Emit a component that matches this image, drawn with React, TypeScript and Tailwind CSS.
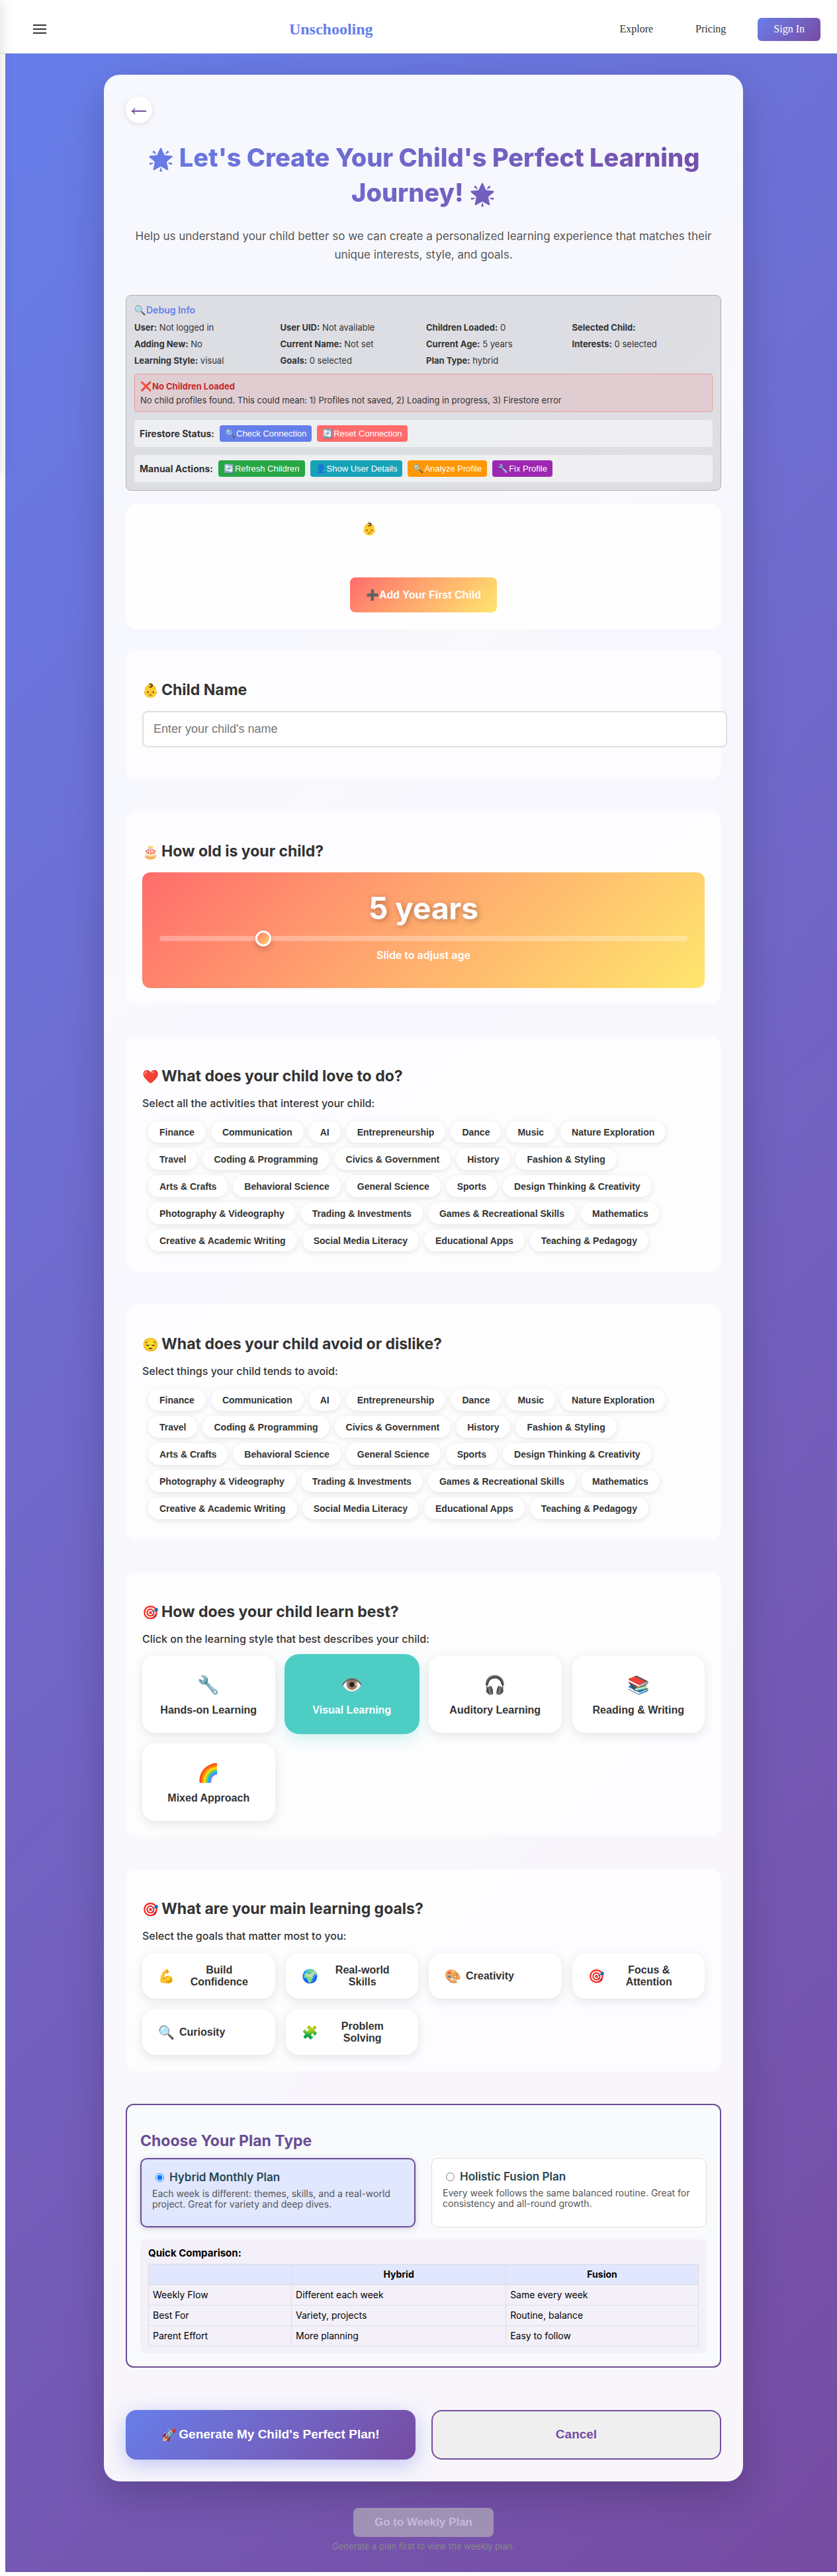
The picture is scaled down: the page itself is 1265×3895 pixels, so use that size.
import { useState } from "react";
import type { ReactNode } from "react";

const TOPICS = [
  "Finance", "Communication", "AI", "Entrepreneurship", "Dance", "Music", "Nature Exploration",
  "Travel", "Coding & Programming", "Civics & Government", "History", "Fashion & Styling",
  "Arts & Crafts", "Behavioral Science", "General Science", "Sports", "Design Thinking & Creativity",
  "Photography & Videography", "Trading & Investments", "Games & Recreational Skills", "Mathematics",
  "Creative & Academic Writing", "Social Media Literacy", "Educational Apps", "Teaching & Pedagogy",
];

const DEBUG_ROWS = [
  ["User:", "Not logged in"],
  ["User UID:", "Not available"],
  ["Children Loaded:", "0"],
  ["Selected Child:", ""],
  ["Adding New:", "No"],
  ["Current Name:", "Not set"],
  ["Current Age:", "5 years"],
  ["Interests:", "0 selected"],
  ["Learning Style:", "visual"],
  ["Goals:", "0 selected"],
  ["Plan Type:", "hybrid"],
];

const STYLES = [
  ["🔧", "Hands-on Learning"],
  ["👁️", "Visual Learning"],
  ["🎧", "Auditory Learning"],
  ["📚", "Reading & Writing"],
  ["🌈", "Mixed Approach"],
];

const GOALS = [
  ["💪", "Build Confidence"],
  ["🌍", "Real-world Skills"],
  ["🎨", "Creativity"],
  ["🎯", "Focus & Attention"],
  ["🔍", "Curiosity"],
  ["🧩", "Problem Solving"],
];

const COMPARISON = [
  ["Weekly Flow", "Different each week", "Same every week"],
  ["Best For", "Variety, projects", "Routine, balance"],
  ["Parent Effort", "More planning", "Easy to follow"],
];

function Section({ icon, title, children, className = "pb-6" }: { icon: string; title: string; children: ReactNode; className?: string }) {
  return (
    <section className={`mb-[49px] rounded-2xl bg-white/70 px-[25px] pt-[46px] ${className}`}>
      <h2 className="mb-[17px] flex h-[29px] items-center text-[23px] leading-[29px] font-bold">
        <span className="flex w-[29px] shrink-0 text-xl">{icon}</span>
        {title}
      </h2>
      {children}
    </section>
  );
}

function TopicPicker({ label }: { label: string }) {
  const [picked, setPicked] = useState<string[]>([]);
  return (
    <div>
      <p className="text-base leading-[19px] font-medium">{label}</p>
      <div className="mt-2 flex flex-wrap gap-2 rounded-xl bg-white/30 px-[9px] pt-[9px] pb-[7px]">
        {TOPICS.map((topic) => (
          <button
            key={topic}
            type="button"
            aria-pressed={picked.includes(topic)}
            onClick={() => setPicked(picked.includes(topic) ? picked.filter((t) => t !== topic) : [...picked, topic])}
            className={`h-[33px] rounded-[20px] px-[17px] font-['Liberation_Sans',Arial,sans-serif] text-sm font-bold shadow-[0_2px_8px_rgba(0,0,0,0.1)] ${picked.includes(topic) ? "bg-[#4ecdc4] text-white" : "bg-white"}`}
          >
            {topic}
          </button>
        ))}
      </div>
    </div>
  );
}

function DebugButton({ icon, color, children }: { icon: string; color: string; children: ReactNode }) {
  return (
    <button type="button" className={`flex h-[25px] items-center rounded px-2 font-['Liberation_Sans',Arial,sans-serif] text-[13px] text-white ${color}`}>
      <span className="flex w-[17px] text-[13px]">{icon}</span>
      {children}
    </button>
  );
}

function PlanOption({ name, text, checked, onSelect }: { name: string; text: string; checked: boolean; onSelect: () => void }) {
  return (
    <label
      className={`block h-[105px] cursor-pointer rounded-[10px] p-4 ${checked ? "border-2 border-[#6a4c93] bg-[#e0e7ff] shadow-[0_2px_8px_rgba(106,76,147,0.25)]" : "border border-[#dddddd] bg-white"}`}
    >
      <span className="flex items-center text-[17px] leading-[22px] font-semibold text-[#264653]">
        <input type="radio" name="plan" checked={checked} onChange={onSelect} className="mr-2 ml-[5px] size-[13px] shrink-0 accent-[#0075ff]" />
        {name}
      </span>
      <span className="mt-[6px] block text-sm leading-4 text-[#555555]">{text}</span>
    </label>
  );
}

export default function App() {
  const [name, setName] = useState("");
  const [age, setAge] = useState(5);
  const [style, setStyle] = useState("Visual Learning");
  const [goals, setGoals] = useState<string[]>([]);
  const [plan, setPlan] = useState("hybrid");

  return (
    <div className="relative overflow-hidden bg-white pb-2 font-['Inter',sans-serif] text-[#333333]">
      <header className="flex h-[81px] items-center justify-between border-b border-[#e0e0e0] bg-white pt-2 pr-[25px] pl-[46px] font-['Liberation_Serif',serif] text-base">
        <button type="button" aria-label="Open menu" className="-mr-[10px] p-1">
          <svg width="20" height="14" viewBox="0 0 20 14" fill="#333333" aria-hidden="true">
            <path d="M0 0h20v2H0zM0 6h20v2H0zM0 12h20v2H0z" />
          </svg>
        </button>
        <a href="#home" className="text-2xl font-bold text-[#667eea]">Unschooling</a>
        <nav className="flex items-center gap-12">
          <a href="#explore" className="mr-4">Explore</a>
          <a href="#pricing">Pricing</a>
          <button type="button" className="h-[35px] rounded-md bg-linear-135 from-[#667eea] to-[#764ba2] px-6 text-white">Sign In</button>
        </nav>
      </header>
      <div className="absolute top-0 -left-60 h-[720px] w-60 shadow-[2px_0_20px_rgba(0,0,0,0.12)]" />

      <main className="ml-2 flex flex-col items-center bg-linear-135 from-[#667eea] to-[#764ba2] pt-8 pb-[31px] pl-[7px]">
        <div className="w-full max-w-[966px] rounded-3xl border border-white/20 bg-white/95 p-8 shadow-[0_20px_60px_rgba(0,0,0,0.2)]">
          <button type="button" aria-label="Back" className="flex size-10 items-center justify-center rounded-full bg-white text-[#764ba2] shadow-[0_2px_8px_rgba(0,0,0,0.1)]">
            <svg width="24" height="12" viewBox="0 0 24 12" fill="none" stroke="currentColor" className="mt-1" aria-hidden="true">
              <path d="M23 6H2" strokeWidth="2" />
              <path d="M6 1.5C5 3.8 3.6 5 1.5 6 3.6 7 5 8.2 6 10.5" strokeWidth="1.5" />
            </svg>
          </button>

          <h1 className="mt-[26px] bg-linear-135 from-[#667eea] to-[#764ba2] bg-clip-text text-center text-[38px] leading-[53px] font-extrabold text-transparent">
            <span className="text-[32px] leading-none">🌟</span> Let's Create Your Child's Perfect Learning
            <br />
            Journey! <span className="text-[32px] leading-none">🌟</span>
          </h1>
          <p className="mt-[25px] text-center text-[17px] leading-7 text-[#555555]">
            Help us understand your child better so we can create a personalized learning experience that matches their unique interests, style, and goals.
          </p>

          <section className="mt-[47px] rounded-lg border border-[#b0b0b4] bg-black/10 p-3 text-[13px] leading-[17px]">
            <h4 className="mb-[10px] flex items-center pt-px text-sm leading-[17px] font-semibold text-[#667eea]">
              <span className="flex w-[18px] text-sm leading-[17px]">🔍</span>Debug Info
            </h4>
            <div className="grid grid-cols-4 gap-2">
              {DEBUG_ROWS.map(([label, value]) => (
                <div key={label}>
                  <strong className="font-bold">{label}</strong> {value}
                </div>
              ))}
            </div>
            <div className="mt-[11px] rounded border border-[#ee9a9a] bg-[#ff0000]/8 px-2 pt-2 pb-[7px] leading-5">
              <div className="flex items-center font-bold text-[#c62828]">
                <span className="flex w-[18px] text-sm">❌</span>No Children Loaded
              </div>
              <p className="mt-px">No child profiles found. This could mean: 1) Profiles not saved, 2) Loading in progress, 3) Firestore error</p>
            </div>
            <div className="mt-3 flex items-center gap-2 rounded bg-white/50 p-2">
              <strong className="text-sm">Firestore Status:</strong>
              <DebugButton icon="🔍" color="bg-[#667eea]">Check Connection</DebugButton>
              <DebugButton icon="🔄" color="bg-[#ff6b6b]">Reset Connection</DebugButton>
            </div>
            <div className="mt-3 flex items-center gap-2 rounded bg-white/50 p-2">
              <strong className="text-sm">Manual Actions:</strong>
              <DebugButton icon="🔄" color="bg-[#28a745]">Refresh Children</DebugButton>
              <DebugButton icon="👤" color="bg-[#17a2b8]">Show User Details</DebugButton>
              <DebugButton icon="🔍" color="bg-[#ff9800]">Analyze Profile</DebugButton>
              <DebugButton icon="🔧" color="bg-[#9c27b0]">Fix Profile</DebugButton>
            </div>
          </section>

          <section className="mt-5 mb-8 flex flex-col items-center rounded-2xl bg-white/90 px-6 pt-[26px] pb-[25px] text-white">
            <h3 className="flex h-6 items-center text-lg font-semibold">
              <span className="flex w-6 text-lg">👶</span>No Children Found
            </h3>
            <p className="mt-[21px] text-sm leading-5">You haven't added any children yet. Add your first child to get started!</p>
            <button type="button" className="mt-5 flex h-[53px] items-center rounded-lg bg-linear-135 from-[#ff6b6b] to-[#ffe66d] px-6 font-['Liberation_Sans',Arial,sans-serif] text-base font-bold">
              <span className="flex w-5 text-base">➕</span>Add Your First Child
            </button>
          </section>

          <Section icon="👶" title="Child Name" className="pb-12">
            <input
              type="text"
              aria-label="Child Name"
              placeholder="Enter your child's name"
              value={name}
              onChange={(e) => setName(e.target.value)}
              className="-mr-[34px] block h-[55px] w-[calc(100%+34px)] rounded-lg border-2 border-[#e0e0e0] bg-white px-[15px] font-['Liberation_Sans',Arial,sans-serif] text-lg placeholder:text-[#757575]"
            />
          </Section>

          <Section icon="🎂" title="How old is your child?">
            <div className="flex h-[175px] flex-col items-center rounded-xl bg-linear-135 from-[#ff6b6b] to-[#ffe66d] px-[26px] pt-[25px] text-white">
              <output className="text-[46px] leading-[58px] font-bold [text-shadow:2px_2px_8px_rgba(0,0,0,0.3)]">{age} years</output>
              <input
                type="range"
                aria-label="Age"
                min={2}
                max={18}
                value={age}
                onChange={(e) => setAge(Number(e.target.value))}
                className="mt-[13px] h-2 w-full appearance-none rounded bg-white/30 [&::-webkit-slider-thumb]:size-6 [&::-webkit-slider-thumb]:appearance-none [&::-webkit-slider-thumb]:rounded-full [&::-webkit-slider-thumb]:border-3 [&::-webkit-slider-thumb]:border-white [&::-webkit-slider-thumb]:bg-linear-135 [&::-webkit-slider-thumb]:from-[#ff7b6b] [&::-webkit-slider-thumb]:to-[#ffd06d] [&::-webkit-slider-thumb]:shadow-[0_4px_8px_rgba(0,0,0,0.2)]"
              />
              <p className="mt-3 text-base leading-[19px] font-semibold">Slide to adjust age</p>
            </div>
          </Section>

          <Section icon="❤️" title="What does your child love to do?">
            <TopicPicker label="Select all the activities that interest your child:" />
          </Section>

          <Section icon="😔" title="What does your child avoid or dislike?">
            <TopicPicker label="Select things your child tends to avoid:" />
          </Section>

          <Section icon="🎯" title="How does your child learn best?">
            <p className="text-base leading-[19px] font-medium">Click on the learning style that best describes your child:</p>
            <div className="mt-[15px] grid grid-cols-4 gap-4">
              {STYLES.map(([icon, label]) => (
                <button
                  key={label}
                  type="button"
                  aria-pressed={style === label}
                  onClick={() => setStyle(label)}
                  className={`flex h-[117px] flex-col items-center rounded-[20px] pt-6 font-['Liberation_Sans',Arial,sans-serif] text-base leading-[18px] font-bold ${style === label ? "bg-[#4ecdc4] text-white shadow-[0_0_0_2px_#4ecdc4,0_8px_25px_rgba(78,205,196,0.3)]" : "bg-white shadow-[0_4px_16px_rgba(0,0,0,0.1)]"}`}
                >
                  <span className="flex h-[42px] items-center text-[27px]">{icon}</span>
                  <span className="mt-2">{label}</span>
                </button>
              ))}
            </div>
          </Section>

          <Section icon="🎯" title="What are your main learning goals?" className="pb-[25px]">
            <p className="text-base leading-[19px] font-medium">Select the goals that matter most to you:</p>
            <div className="mt-4 grid grid-cols-4 gap-4">
              {GOALS.map(([icon, label]) => (
                <button
                  key={label}
                  type="button"
                  aria-pressed={goals.includes(label)}
                  onClick={() => setGoals(goals.includes(label) ? goals.filter((g) => g !== label) : [...goals, label])}
                  className={`flex h-[69px] items-center gap-2 rounded-[20px] px-6 font-['Liberation_Sans',Arial,sans-serif] text-base leading-[18px] font-bold shadow-[0_4px_16px_rgba(0,0,0,0.1)] ${goals.includes(label) ? "bg-[#4ecdc4] text-white" : "bg-white"}`}
                >
                  <span className="flex w-6 shrink-0 text-xl">{icon}</span>
                  <span>{label}</span>
                </button>
              ))}
            </div>
          </Section>

          <section className="rounded-xl border-2 border-[#6a4c93] bg-[#f8fafc] px-5 pt-10 pb-5">
            <h2 className="mb-[11px] text-[23px] leading-[29px] font-bold text-[#6a4c93]">Choose Your Plan Type</h2>
            <div className="grid grid-cols-2 gap-6">
              <PlanOption
                name="Hybrid Monthly Plan"
                text="Each week is different: themes, skills, and a real-world project. Great for variety and deep dives."
                checked={plan === "hybrid"}
                onSelect={() => setPlan("hybrid")}
              />
              <PlanOption
                name="Holistic Fusion Plan"
                text="Every week follows the same balanced routine. Great for consistency and all-round growth."
                checked={plan === "fusion"}
                onSelect={() => setPlan("fusion")}
              />
            </div>
            <div className="mt-[18px] rounded-lg bg-[#f3f0fa] px-3 pt-3 pb-[10px] text-sm leading-[18px] text-black">
              <strong className="text-[15px]">Quick Comparison:</strong>
              <table className="mt-[7px] w-full border-collapse">
                <thead>
                  <tr className="bg-[#e0e7ff]">
                    <td className="w-[26%] border border-[#dddddd] p-[6px]" />
                    <th scope="col" className="w-[39%] border border-[#dddddd] p-[6px] font-bold">Hybrid</th>
                    <th scope="col" className="w-[35%] border border-[#dddddd] p-[6px] font-bold">Fusion</th>
                  </tr>
                </thead>
                <tbody>
                  {COMPARISON.map((row) => (
                    <tr key={row[0]}>
                      {row.map((cell) => (
                        <td key={cell} className="border border-[#dddddd] p-[6px]">{cell}</td>
                      ))}
                    </tr>
                  ))}
                </tbody>
              </table>
            </div>
          </section>

          <div className="mt-16 grid grid-cols-2 gap-6 font-['Liberation_Sans',Arial,sans-serif] text-[19px] font-bold">
            <button type="button" className="flex h-[75px] items-center justify-center rounded-2xl bg-linear-135 from-[#667eea] to-[#764ba2] text-white shadow-[0_8px_32px_rgba(102,126,234,0.4)]">
              <span className="flex w-[26px] text-lg">🚀</span>Generate My Child's Perfect Plan!
            </button>
            <button type="button" className="h-[75px] rounded-2xl border-2 border-[#764ba2] bg-[#efefef] text-[#764ba2]">Cancel</button>
          </div>
        </div>

        <button type="button" disabled className="mt-10 h-11 rounded-lg bg-[#bdbdbd] px-8 font-['Liberation_Sans',Arial,sans-serif] text-[17px] font-bold text-white opacity-60">
          Go to Weekly Plan
        </button>
        <p className="mt-[6px] text-[13px] leading-4 text-[#888888]">Generate a plan first to view the weekly plan.</p>
      </main>
    </div>
  );
}
